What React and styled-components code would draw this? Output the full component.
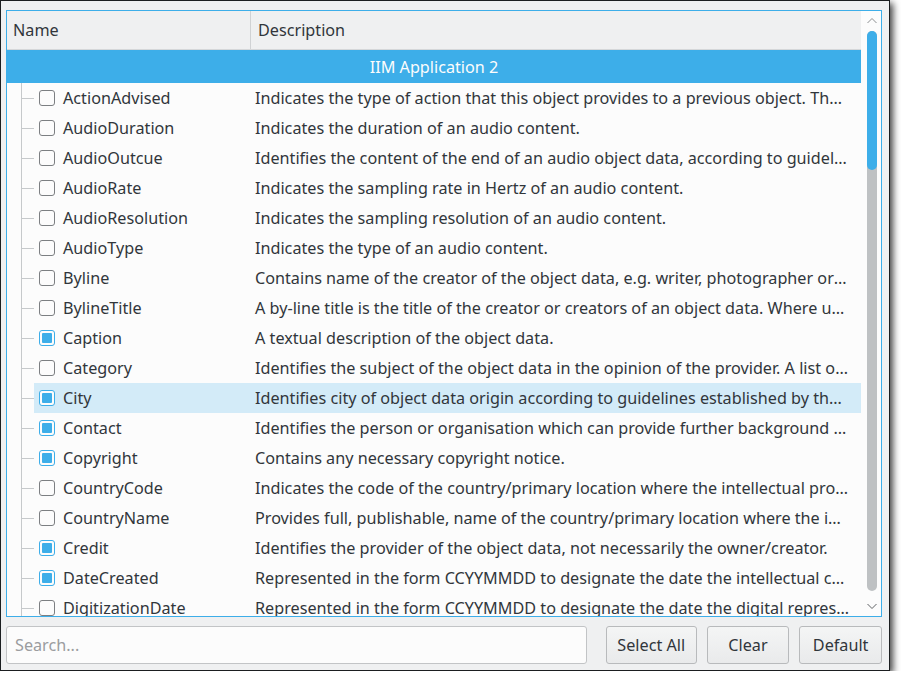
import React, { useState } from 'react'
import styled, { createGlobalStyle } from 'styled-components'

const GlobalStyle = createGlobalStyle`
  html, body {
    margin: 0;
    padding: 0;
    background: #ffffff;
  }
  body {
    font-family: "Noto Sans", "DejaVu Sans", sans-serif;
    font-size: 16.2px;
    color: #31363b;
  }
  * { box-sizing: border-box; }
`

const Window = styled.div`
  width: 890px;
  height: 671px;
  border: 1px solid #1b1e20;
  background: #eff0f1;
  box-shadow: 3px 3px 7px rgba(0, 0, 0, 0.75);
  padding: 9px 7px 6px 5px;
  display: flex;
  flex-direction: column;
  gap: 9px;
`

const Frame = styled.div`
  height: 608px;
  border: 1px solid #3daee9;
  background: #fcfcfc;
  display: flex;
  overflow: hidden;
`

const Content = styled.div`
  flex: 1;
  min-width: 0;
  display: flex;
  flex-direction: column;
  overflow: hidden;
`

const Header = styled.div`
  height: 39px;
  flex-shrink: 0;
  display: flex;
  background: #eff0f1;
  border-bottom: 1px solid #d5d7d9;
`

const HeaderCell = styled.div`
  width: ${p => p.width ? p.width + 'px' : 'auto'};
  flex: ${p => p.width ? 'none' : 1};
  padding-left: ${p => p.pad}px;
  display: flex;
  align-items: center;
  border-right: ${p => p.divider ? '1px solid #d0d2d4' : 'none'};
`

const GroupRow = styled.div`
  height: 33px;
  flex-shrink: 0;
  background: #3daee9;
  color: #fcfcfc;
  display: flex;
  align-items: center;
  justify-content: center;
`

const Row = styled.div`
  height: 30px;
  flex-shrink: 0;
  display: flex;
  align-items: center;
`

const Branch = styled.div`
  width: 27px;
  height: 100%;
  flex-shrink: 0;
  position: relative;
  &::before {
    content: '';
    position: absolute;
    left: 14px;
    top: 0;
    bottom: 0;
    border-left: 1px solid #c6c9cb;
  }
  &::after {
    content: '';
    position: absolute;
    left: 15px;
    width: 12px;
    top: 15px;
    border-top: 1px solid #c6c9cb;
  }
`

const Item = styled.div`
  flex: 1;
  height: 100%;
  display: flex;
  align-items: center;
  min-width: 0;
  background: ${p => p.hover ? '#d3ebf8' : 'transparent'};
`

const NameCell = styled.div`
  width: 217px;
  flex-shrink: 0;
  display: flex;
  align-items: center;
  padding-left: 5px;
  gap: 8px;
  white-space: nowrap;
`

const Check = styled.span`
  width: 16px;
  height: 16px;
  flex-shrink: 0;
  border: 1px solid ${p => p.checked ? '#3daee9' : '#7c7f82'};
  border-radius: 3px;
  background: #fcfcfc;
  padding: 2px;
  display: flex;
  &::after {
    content: '';
    flex: 1;
    border-radius: 1px;
    background: ${p => p.checked ? '#3daee9' : 'transparent'};
  }
`

const DescCell = styled.div`
  flex: 1;
  min-width: 0;
  padding: 0 11px 0 4px;
  white-space: nowrap;
  overflow: hidden;
  text-overflow: ellipsis;
`

const ScrollBar = styled.div`
  width: 20px;
  flex-shrink: 0;
  display: flex;
  flex-direction: column;
  align-items: center;
  padding: 4px 0 4px 2px;
`

const Arrow = styled.svg`
  width: 12px;
  height: 12px;
  flex-shrink: 0;
`

const Track = styled.div`
  flex: 1;
  width: 10px;
  margin: 4px 0 9px;
  border-radius: 5px;
  background: #bec1c3;
  display: flex;
  flex-direction: column;
`

const Handle = styled.div`
  height: 139px;
  border-radius: 5px;
  background: #3daee9;
`

const Bottom = styled.div`
  display: flex;
  align-items: center;
  height: 38px;
`

const Search = styled.input`
  width: 583px;
  height: 38px;
  border: 1px solid #c2c4c6;
  border-radius: 3px;
  background: #fcfcfc;
  font: inherit;
  color: #31363b;
  padding: 0 8px;
  margin-right: 19px;
  outline: none;
  &::placeholder { color: #9b9d9f; }
`

const Button = styled.button`
  width: ${p => p.w}px;
  height: 38px;
  margin-left: ${p => p.first ? 0 : 10}px;
  border: 1px solid #b8babc;
  border-radius: 3px;
  background: linear-gradient(#f4f5f5, #e9eaeb);
  font: inherit;
  color: #31363b;
  padding: 0;
  cursor: pointer;
`

const rows = [
  ['ActionAdvised', false, 'Indicates the type of action that this object provides to a previous object. The link to the previous object is made using tags.'],
  ['AudioDuration', false, 'Indicates the duration of an audio content.'],
  ['AudioOutcue', false, 'Identifies the content of the end of an audio object data, according to guidelines established by the provider.'],
  ['AudioRate', false, 'Indicates the sampling rate in Hertz of an audio content.'],
  ['AudioResolution', false, 'Indicates the sampling resolution of an audio content.'],
  ['AudioType', false, 'Indicates the type of an audio content.'],
  ['Byline', false, 'Contains name of the creator of the object data, e.g. writer, photographer or graphic artist.'],
  ['BylineTitle', false, 'A by-line title is the title of the creator or creators of an object data. Where used, a by-line title should follow the by-line it modifies.'],
  ['Caption', true, 'A textual description of the object data.'],
  ['Category', false, 'Identifies the subject of the object data in the opinion of the provider. A list of categories will be maintained by a regional registry.'],
  ['City', true, 'Identifies city of object data origin according to guidelines established by the provider.', true],
  ['Contact', true, 'Identifies the person or organisation which can provide further background information on the object data.'],
  ['Copyright', true, 'Contains any necessary copyright notice.'],
  ['CountryCode', false, 'Indicates the code of the country/primary location where the intellectual property of the object data was created.'],
  ['CountryName', false, 'Provides full, publishable, name of the country/primary location where the intellectual property of the object data was created.'],
  ['Credit', true, 'Identifies the provider of the object data, not necessarily the owner/creator.'],
  ['DateCreated', true, 'Represented in the form CCYYMMDD to designate the date the intellectual content of the object data was created.'],
  ['DigitizationDate', false, 'Represented in the form CCYYMMDD to designate the date the digital representation of the object data was created.'],
]

const App = () => {
  const [search, setSearch] = useState('')

  return (
    <>
      <GlobalStyle />
      <Window>
        <Frame>
          <Content>
            <Header>
              <HeaderCell width={244} pad={6} divider>Name</HeaderCell>
              <HeaderCell pad={7}>Description</HeaderCell>
            </Header>
            <GroupRow>IIM Application 2</GroupRow>
            {rows.map(([name, checked, desc, hover]) => (
              <Row key={name}>
                <Branch />
                <Item hover={hover}>
                  <NameCell>
                    <Check checked={checked} />
                    {name}
                  </NameCell>
                  <DescCell>{desc}</DescCell>
                </Item>
              </Row>
            ))}
          </Content>
          <ScrollBar>
            <Arrow viewBox="0 0 12 12">
              <path d="M1.5 8 L6 3.5 L10.5 8" fill="none" stroke="#8d9092" strokeWidth="1" />
            </Arrow>
            <Track>
              <Handle />
            </Track>
            <Arrow viewBox="0 0 12 12">
              <path d="M1.5 4 L6 8.5 L10.5 4" fill="none" stroke="#5f6265" strokeWidth="1" />
            </Arrow>
          </ScrollBar>
        </Frame>
        <Bottom>
          <Search placeholder="Search..." value={search} onChange={e => setSearch(e.target.value)} />
          <Button first w={91}>Select All</Button>
          <Button w={83}>Clear</Button>
          <Button w={83}>Default</Button>
        </Bottom>
      </Window>
    </>
  )
}

export default App
